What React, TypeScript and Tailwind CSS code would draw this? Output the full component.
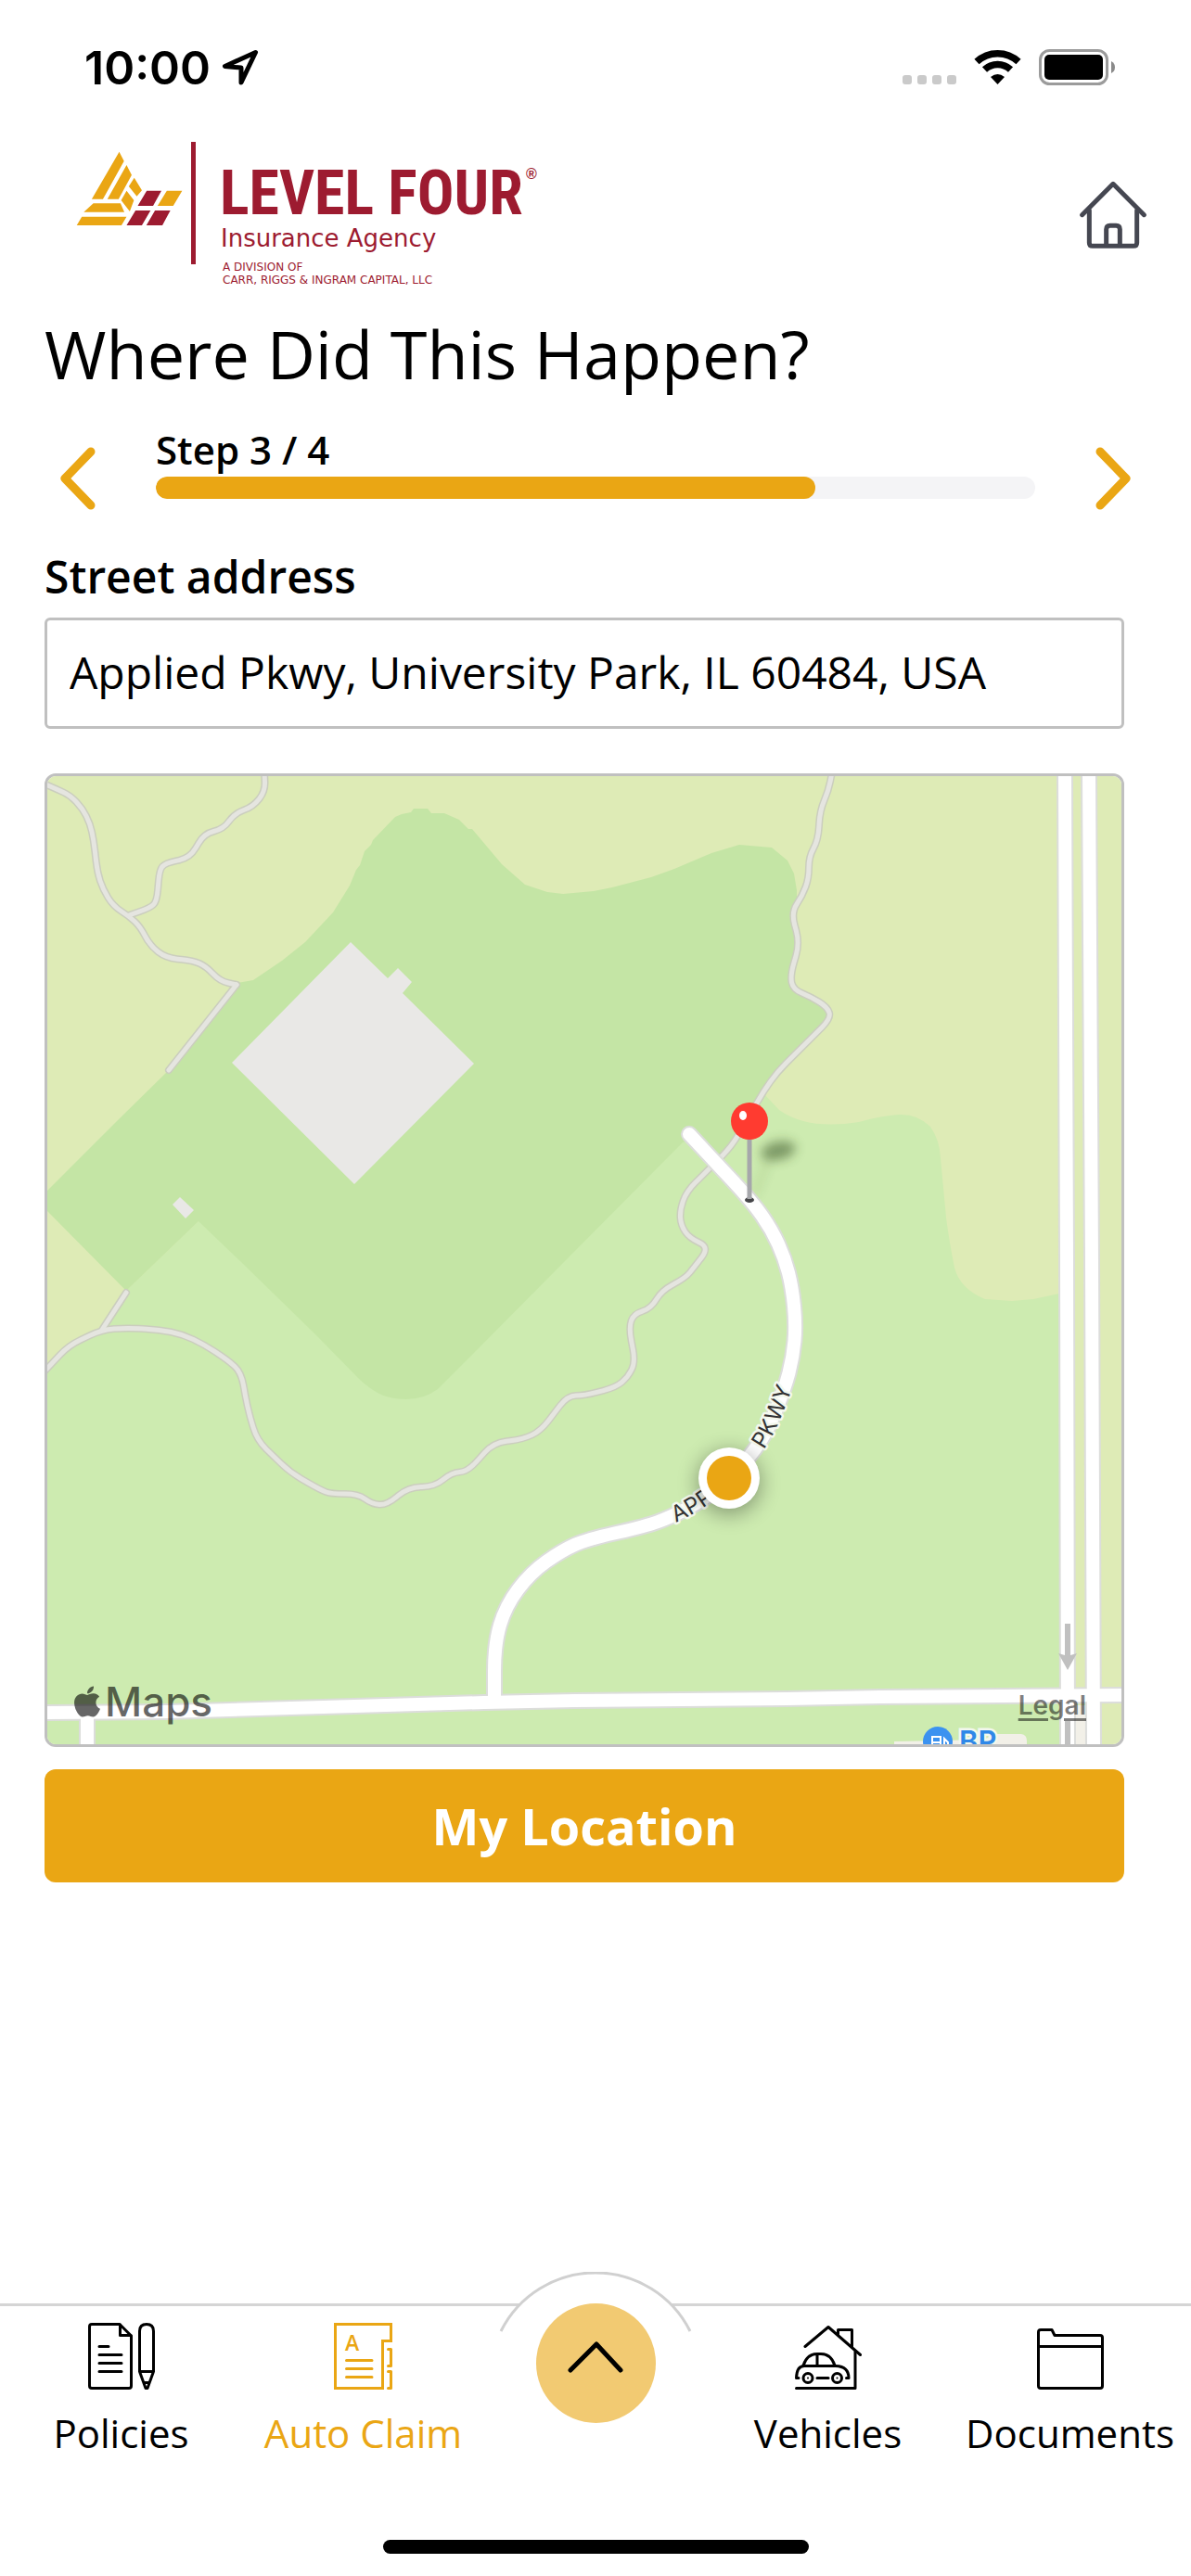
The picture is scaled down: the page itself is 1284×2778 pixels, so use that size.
import type { ReactNode } from "react";
import { FaApple } from "react-icons/fa";

type Point = [number, number];

// Polyline with rounded corners, each corner cut back by at most `radius`
function roundedPath(points: Point[], radius: number) {
  let d = `M${points[0][0]} ${points[0][1]}`;
  for (let i = 1; i < points.length - 1; i++) {
    const [px, py] = points[i - 1];
    const [x, y] = points[i];
    const [nx, ny] = points[i + 1];
    const before = Math.hypot(px - x, py - y);
    const after = Math.hypot(nx - x, ny - y);
    const a = Math.min(radius, before / 2) / before;
    const b = Math.min(radius, after / 2) / after;
    d += ` L${x + (px - x) * a} ${y + (py - y) * a} Q${x} ${y} ${x + (nx - x) * b} ${y + (ny - y) * b}`;
  }
  const [lx, ly] = points[points.length - 1];
  return `${d} L${lx} ${ly}`;
}

const trails = [
  roundedPath([[-4, 8], [10, 14], [25, 21], [38, 35], [46, 51], [50, 69], [54, 104], [60, 122], [71, 140], [88, 151], [100, 162], [111, 183], [128, 196], [157, 199], [171, 205], [186, 221], [204, 225]], 12),
  roundedPath([[204, 225], [131, 317]], 0),
  roundedPath([[234, -4], [235, 16], [222, 33], [202, 40], [190, 57], [169, 62], [154, 88], [127, 94], [121, 101], [118, 135], [111, 142], [88, 150]], 12),
  roundedPath([[846, -4], [842, 16], [833, 37], [831, 69], [821, 87], [821, 110], [814, 129], [802, 147], [811, 180], [801, 215], [804, 230], [823, 238], [841, 249], [845, 261], [787, 319], [772, 340], [738, 399], [712, 425], [689, 448], [682, 468], [683, 484], [692, 498], [714, 508], [697, 530], [688, 541], [662, 555], [651, 574], [632, 580], [627, 595], [634, 632], [626, 648], [613, 659], [579, 668], [561, 668], [532, 706], [513, 715], [481, 719], [453, 750], [436, 751], [418, 766], [389, 767], [366, 786], [350, 785], [335, 774], [306, 774], [295, 770], [262, 751], [226, 716], [216, 682], [209, 643], [195, 630], [169, 613], [146, 602], [121, 597], [85, 595], [59, 597], [23, 614], [-4, 643]], 14),
  roundedPath([[59, 597], [85, 557]], 0),
];

const parkway: Point[] = [[482, 995], [482, 936], [494, 895], [521, 859], [555, 835], [582, 823], [645, 809], [672, 799], [703, 783], [737, 757], [772, 716], [795, 661], [804, 626], [807, 592], [803, 551], [795, 520], [781, 489], [760, 459], [692, 386]];
const parkwayPath = roundedPath(parkway, 30);

const streets = [
  "M-4 1010 L130 1009 L471 999 L569 997 L798 995 L898 993 L1162 991",
  "M43 1010 V1050",
  "M1097 -4 L1099 523 L1100 1050",
  "M1123 -4 L1126 523 L1128 1050",
];

function MapView() {
  return (
    <section aria-label="Map" className="relative mt-12 overflow-hidden rounded-xl border-3 border-[#c0c0c0]">
      <svg viewBox="0 0 1158 1044" className="block h-auto w-full bg-[#deebb6]">
        <defs>
          <path id="parkway" d={parkwayPath} />
          <filter id="pin-shadow" x="-50%" y="-100%" width="200%" height="300%">
            <feGaussianBlur stdDeviation="6" />
          </filter>
          <filter id="dot-shadow" x="-100%" y="-100%" width="300%" height="300%">
            <feGaussianBlur stdDeviation="11" />
          </filter>
        </defs>

        {/* Land cover */}
        <path
          fill="#cdebb0"
          d="M85 555 L59 597 L23 614 L0 640 V1044 H1091 V558 L1063 564 L1040 566 L1011 564 Q984 553 978 530 Q972 500 969 476 L963 412 Q962 392 952 378 Q938 364 918 365 Q900 366 875 373 Q820 382 789 360 L772 342 L600 342 L163 480 Z"
        />
        <path
          fill="#c4e5a5"
          d="M0 447 L75 372 L131 317 L205 223 L222 220 L253 199 L278 179 L308 147 L326 118 L333 101 L337 96 L342 81 L349 74 L351 69 L375 44 L382 41 L392 39 L395 35 H410 L414 40 H428 L444 47 L454 57 H458 L490 95 L515 117 L539 125 L556 127 L589 124 L609 120 L651 109 L676 100 L716 83 L746 74 L781 77 L798 91 L805 105 L808 123 L808 137 L803 148 L811 180 L801 215 L806 232 L823 238 L843 251 V262 L787 319 L772 342 L727 410 L700 390 L685 395 L558 523 L452 630 L421 661 Q406 672 387 672 Q368 672 356 665 Q347 660 337 651 L291 604 L208 523 L163 480 L85 555 L0 469 Z"
        />
        <path fill="#f2f0e8" d="M913 1041 L1010 1039 L1020 1033 L1050 1033 Q1056 1034 1056 1040 V1044 H913 Z M1108 1002 H1121 V1044 H1108 Z" />

        {/* Buildings */}
        <path fill="#e9e8e6" d="M327 179 L367 218 L378 207 L393 222 L383 234 L460 310 L331 440 L199 309 Z M143 454 L158 468 L149 477 L135 462 Z" />

        {/* Trails, casing then surface */}
        <g fill="none" strokeLinecap="round" strokeLinejoin="round">
          <g stroke="#cbcebe" strokeWidth="8">
            {trails.map((d) => <path key={d} d={d} />)}
          </g>
          <g stroke="#e5e5e0" strokeWidth="5">
            {trails.map((d) => <path key={d} d={d} />)}
          </g>
        </g>

        {/* Streets */}
        <g fill="none" strokeLinejoin="round">
          <g stroke="#dcdddb" strokeWidth="18">
            {streets.map((d) => <path key={d} d={d} />)}
            <path d={parkwayPath} strokeLinecap="round" />
          </g>
          <g stroke="#ffffff" strokeWidth="14">
            {streets.map((d) => <path key={d} d={d} />)}
            <path d={parkwayPath} strokeLinecap="round" />
          </g>
        </g>
        <path fill="#c0c0c0" d="M1097 914 H1103 V948 L1110 946 L1100 964 L1090 946 L1097 948 Z M1097 1019 H1103 V1044 H1097 Z" />

        <g
          className="font-['Inter',sans-serif]"
          fontSize="24"
          fill="#333333"
          stroke="#f3f8ee"
          strokeWidth="5"
          strokeLinejoin="round"
          paintOrder="stroke"
        >
          <text dy="8">
            <textPath href="#parkway" startOffset="312">APPLIED</textPath>
          </text>
          <text dy="8">
            <textPath href="#parkway" startOffset="432">PKWY</textPath>
          </text>
        </g>

        {/* Petrol station */}
        <circle cx="960" cy="1041" r="16" fill="#3b92f0" />
        <path fill="none" stroke="#ffffff" strokeWidth="2" d="M954 1052 V1036 H963 V1052 M954 1042 H963 M963 1046 H967 V1038 L971 1042 V1052" />
        <text x="983" y="1052" fontSize="31" fill="#2f88e8" stroke="#f3f8ee" strokeWidth="5" paintOrder="stroke" className="font-['Inter',sans-serif] font-semibold">
          BP
        </text>

        {/* Current location */}
        <circle cx="735" cy="762" r="34" fill="#000000" opacity="0.35" filter="url(#dot-shadow)" />
        <circle cx="735" cy="757" r="33" fill="#ffffff" />
        <circle cx="735" cy="757" r="24" fill="#eaa614" />

        {/* Pin */}
        <g filter="url(#pin-shadow)" opacity="0.5">
          <ellipse cx="788" cy="404" rx="19" ry="10" fill="#2f4a1c" transform="rotate(-12 788 404)" />
          <path d="M778 412 L762 452" stroke="#2f4a1c" strokeOpacity="0.5" strokeWidth="3" />
        </g>
        <ellipse cx="757" cy="457" rx="5" ry="3" fill="#454548" />
        <path d="M757 390 V456" stroke="#a6a7ab" strokeWidth="5" />
        <circle cx="757" cy="372" r="20" fill="#ff3b30" />
        <ellipse cx="750" cy="366" rx="4" ry="5" fill="#ffffff" />
      </svg>

      <div className="absolute bottom-[18px] left-6 flex items-center font-['Inter',sans-serif] text-[44px] leading-14 font-medium text-black/60">
        <FaApple className="size-[38px]" aria-hidden="true" />
        Maps
      </div>
      <a href="#legal" className="absolute right-[38px] bottom-6 font-['Inter',sans-serif] text-[28px] leading-9 font-semibold text-black/50 underline decoration-3 underline-offset-4">
        Legal
      </a>
    </section>
  );
}

function StatusBar() {
  return (
    <div className="flex h-[146px] items-center justify-between pr-[82px] pl-[91px]">
      <div className="flex items-center gap-3 font-['Inter',sans-serif] text-[50px] leading-none font-semibold">
        10:00
        <svg viewBox="0 0 40 40" className="size-10" fill="none" stroke="#000000" strokeWidth="5" strokeLinejoin="round">
          <path d="M36.500 3.500 L3.500 18.500 L21 20 V36 Z" />
        </svg>
      </div>
      <svg viewBox="0 0 230 40" className="h-10 w-[230px]">
        <g fill="#cacaca">
          <rect x="1" y="28" width="10" height="10" rx="3" />
          <rect x="17" y="28" width="10" height="10" rx="3" />
          <rect x="33" y="28" width="10" height="10" rx="3" />
          <rect x="49" y="28" width="10" height="10" rx="3" />
        </g>
        <g fill="none" stroke="#000000" strokeWidth="7.500">
          <path d="M81 13.500 A33 33 0 0 1 126 13.500" />
          <path d="M89.500 22 A20.500 20.500 0 0 1 117.500 22" />
        </g>
        <path d="M96 30 Q103.500 24 111 30 L103.500 38 Z" />
        <rect x="149.500" y="1.500" width="72" height="36" rx="10" fill="none" stroke="#9b9b9b" strokeWidth="3" />
        <rect x="154" y="6" width="63" height="27" rx="5" />
        <path d="M226 13 Q230 15 230 19.500 Q230 24 226 26 Z" fill="#8a8a8a" />
      </svg>
    </div>
  );
}

function Logo() {
  return (
    <svg viewBox="82 153 500 156" className="h-[156px] w-[500px]" role="img" aria-label="Level Four Insurance Agency">
      <g transform="translate(60 140) scale(0.3444 0.3333)">
        <path
          fill="#eaa614"
          d="M199 71 L214 101 L148 224 H113 Z M222 114 L238 146 L197 224 H162 Z M246 155 L270 196 L254 215 L229 183 Z M222 197 L245 228 L232 264 L205 228 Z M118 238 H203 L215 266 H88 Z M82 281 H222 L206 309 H66 Z M348 197 H396 L368 246 H319 Z"
        />
        <path fill="#9d1b30" d="M285 197 H331 L305 246 H257 Z M250 261 H297 L270 309 H222 Z M311 261 H359 L334 309 H284 Z" />
      </g>
      <rect x="206" y="153" width="5" height="132" fill="#9d1b30" />
      <g fill="#9d1b30">
        <text x="237" y="231" fontSize="66" className="font-['Roboto_Condensed','Noto_Sans_Condensed','DejaVu_Sans_Condensed',sans-serif] font-bold">
          LEVEL FOUR
        </text>
        <text x="567" y="193" fontSize="16" className="font-['Liberation_Sans',sans-serif] font-bold">®</text>
        <g className="font-['DejaVu_Sans',sans-serif]">
          <text x="238" y="266" fontSize="26">Insurance Agency</text>
          <text x="240" y="292" fontSize="12">A DIVISION OF</text>
          <text x="240" y="306" fontSize="12">CARR, RIGGS &amp; INGRAM CAPITAL, LLC</text>
        </g>
      </g>
    </svg>
  );
}

function Chevron({ d }: { d: string }) {
  return (
    <svg viewBox="0 0 38 68" className="h-[68px] w-[38px]" fill="none" stroke="#eaa614" strokeWidth="9" strokeLinecap="round" strokeLinejoin="round">
      <path d={d} />
    </svg>
  );
}

function TabIcon({ children }: { children: ReactNode }) {
  return (
    <svg viewBox="0 0 72 72" className="size-[72px]" fill="none" stroke="currentColor" strokeWidth="3" strokeLinecap="round" strokeLinejoin="round">
      {children}
    </svg>
  );
}

const policiesIcon = (
  <TabIcon>
    <path d="M4 1.500 H34 L46.500 14 V68 Q46.500 70.500 44 70.500 H4 Q1.500 70.500 1.500 68 V4 Q1.500 1.500 4 1.500 Z" />
    <path d="M34.500 2 V13.500 H46" />
    <path d="M12 25.500 H22 M12 34.500 H36 M12 43.500 H36 M12 52.500 H36" />
    <path d="M55.500 52.500 V9 Q55.500 1.500 63 1.500 Q70.500 1.500 70.500 9 V52.500 Z M55.500 52.500 L62 70.500 H64 L70.500 52.500 M60 64.500 H66" />
  </TabIcon>
);

const claimIcon = (
  <TabIcon>
    <g transform="translate(4 0)">
      <path d="M1.500 1.500 H61.500 V19.500 H52.500 V70.500 H1.500 Z" strokeLinejoin="miter" />
      <path d="M58.500 28.500 H61.500 V46.500 H58.500 M58.500 52.500 H61.500 V70.500 H58.500" />
      <path d="M13.500 40.500 H41 M13.500 49.500 H41 M13.500 58.500 H41" />
      <text x="12" y="30" fontSize="23" fill="currentColor" stroke="none" className="font-['Open_Sans',sans-serif] font-semibold">A</text>
    </g>
  </TabIcon>
);

const vehiclesIcon = (
  <TabIcon>
    <path d="M11 25.500 L36 4.500 L70.500 34.500" />
    <path d="M46.500 12 V7.500 H61.500 V26 M65 31 V70.500 H1.500" />
    <path d="M4 59.500 H1.500 Q2 46.500 10 46.500 H44 Q58 47 58 59.500 H55.500" />
    <path d="M9 46 Q13 33.500 24 33.500 H28 Q39 33.500 43 46 M24 34 V46" />
    <circle cx="14" cy="59.500" r="5" />
    <circle cx="45.500" cy="59.500" r="5" />
    <path d="M14 59.500 h0.010 M45.500 59.500 h0.010" strokeWidth="2" />
    <path d="M24 59.500 H36" />
  </TabIcon>
);

const documentsIcon = (
  <TabIcon>
    <path d="M1.500 10 Q1.500 7.500 4 7.500 H16 L19 13.500 H68 Q70.500 13.500 70.500 16 V68 Q70.500 70.500 68 70.500 H4 Q1.500 70.500 1.500 68 Z M1.500 25.500 H70.500" />
  </TabIcon>
);

function Tab({ label, icon, active }: { label: string; icon: ReactNode; active?: boolean }) {
  return (
    <a
      href="#tab"
      aria-current={active ? "page" : undefined}
      className={`flex flex-1 flex-col items-center gap-[19px] text-[42px] leading-14 ${active ? "text-[#eaa614]" : "text-black"}`}
    >
      {icon}
      {label}
    </a>
  );
}

export default function App() {
  return (
    <div className="flex min-h-screen flex-col bg-white font-['Open_Sans',sans-serif] text-black">
      <StatusBar />

      <header className="flex items-center justify-between pt-[7px] pr-12 pl-[82px]">
        <Logo />
        <button type="button" aria-label="Home">
          <svg viewBox="42 42 216 219" className="h-[73px] w-[72px]" fill="none" stroke="#454751" strokeWidth="15" strokeLinecap="round" strokeLinejoin="round">
            <path d="M50 152 L150 52 L250 152" />
            <path d="M73 138 V242 Q73 253 84 253 H216 Q227 253 227 242 V138" />
            <path d="M128 250 V199 Q128 187 140 187 H160 Q172 187 172 199 V250" />
          </svg>
        </button>
      </header>

      <main>
        <h1 className="mt-7 px-12 text-[72px] leading-[88px]">Where Did This Happen?</h1>

        <div className="mt-[35px] flex items-end gap-[65px] px-[65px]">
          <button type="button" aria-label="Previous step">
            <Chevron d="M33 5 L5 34 L33 63" />
          </button>
          <div className="flex-1 pb-3">
            <p className="text-[42px] leading-[50px] font-semibold">Step 3 / 4</p>
            <div className="mt-1 h-6 overflow-hidden rounded-xl bg-[#f4f4f6]">
              <div className="h-full w-3/4 rounded-xl bg-[#eaa614]" />
            </div>
          </div>
          <button type="button" aria-label="Next step">
            <Chevron d="M5 5 L33 34 L5 63" />
          </button>
        </div>

        <div className="mt-11 pr-[72px] pl-12">
          <label htmlFor="street" className="block text-[48px] leading-14 font-semibold">
            Street address
          </label>
          <input
            id="street"
            type="text"
            defaultValue="Applied Pkwy, University Park, IL 60484, USA"
            className="mt-4 h-[120px] w-full rounded-md border-3 border-[#c0c0c0] px-6 pb-1 text-[48px]"
          />
          <MapView />
          <button type="button" className="mt-6 h-[122px] w-full rounded-xl bg-[#eaa614] text-[54px] leading-none font-bold text-white">
            My Location
          </button>
        </div>
      </main>

      <nav className="relative mt-auto border-t-3 border-[#d5d5d5] pt-[18px] pb-6">
        <div className="absolute -top-[37px] left-1/2 flex -translate-x-1/2 flex-col items-center">
          <svg viewBox="0 0 210 66" className="h-[66px] w-[210px]">
            <path d="M3 64 A114 114 0 0 1 207 64" fill="#ffffff" stroke="#d0d0d0" strokeWidth="3" />
          </svg>
          <button type="button" aria-label="More" className="-mt-8 flex size-[129px] items-center justify-center rounded-full bg-[#f2ca72] pb-3">
            <svg viewBox="0 0 60 36" className="h-9 w-[60px]" fill="none" stroke="#000000" strokeWidth="5" strokeLinecap="round" strokeLinejoin="round">
              <path d="M3 31 L31 3 L57 31" />
            </svg>
          </button>
        </div>

        <div className="flex">
          <Tab label="Policies" icon={policiesIcon} />
          <Tab label="Auto Claim" icon={claimIcon} active />
          <div className="w-[240px]" />
          <Tab label="Vehicles" icon={vehiclesIcon} />
          <Tab label="Documents" icon={documentsIcon} />
        </div>

        <div className="mx-auto mt-[87px] h-[15px] w-[459px] rounded-full bg-black" />
      </nav>
    </div>
  );
}
